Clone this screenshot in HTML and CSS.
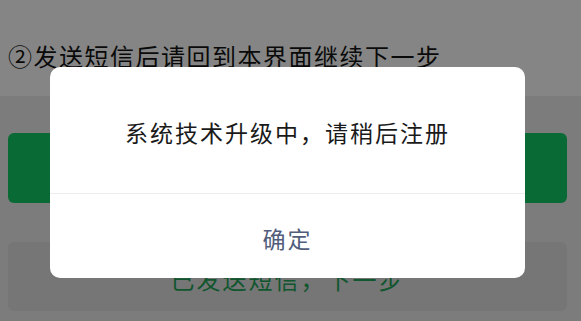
FILE: index.html
```html
<!DOCTYPE html>
<html lang="zh-CN">
<head>
<meta charset="utf-8">
<link rel="stylesheet" href="styles.css">
</head>
<body>
<div class="page">
  <div class="tip">
    <p class="tip-text">②发送短信后请回到本界面继续下一步</p>
  </div>
  <div class="actions">
    <div class="btn btn-primary"></div>
    <div class="btn btn-secondary">已发送短信，下一步</div>
  </div>
  <div class="mask"></div>
  <div class="dialog">
    <div class="dialog-body">系统技术升级中，请稍后注册</div>
    <div class="dialog-footer">确定</div>
  </div>
</div>
</body>
</html>
```
FILE: styles.css
```css
* { box-sizing: border-box; }
html, body {
  margin: 0;
  padding: 0;
  width: 581px;
  height: 321px;
  overflow: hidden;
  font-family: "Noto Sans CJK SC", "Noto Sans", sans-serif;
}
.page {
  position: relative;
  width: 581px;
  height: 321px;
  background: #ededed;
}
.tip {
  height: 96px;
  background: #ffffff;
  padding: 39px 14px 0 8px;
}
.tip-text {
  margin: 0;
  font-size: 24px;
  line-height: 34px;
  letter-spacing: 1.5px;
  color: #141414;
}
.actions {
  padding: 37px 14px 0 8px;
  display: flex;
  flex-direction: column;
  gap: 39px;
}
.btn {
  height: 70px;
  border-radius: 6px;
  display: flex;
  align-items: center;
  justify-content: center;
  font-size: 24px;
  letter-spacing: 2px;
}
.btn-primary {
  background: #15cc68;
}
.btn-secondary {
  height: 69px;
  background: #e2e2e2;
  color: #1fa558;
  padding-top: 4px;
}
.mask {
  position: absolute;
  inset: 0;
  background: rgba(0, 0, 0, 0.48);
}
.dialog {
  position: absolute;
  left: 50px;
  top: 67px;
  width: 475px;
  height: 211px;
  background: #ffffff;
  border-radius: 10px;
  display: flex;
  flex-direction: column;
}
.dialog-body {
  height: 127px;
  display: flex;
  align-items: center;
  justify-content: center;
  font-size: 23px;
  letter-spacing: 2px;
  color: #1a1a1a;
  border-bottom: 1px solid #ececec;
  padding-top: 4px;
}
.dialog-footer {
  flex: 1;
  display: flex;
  align-items: center;
  justify-content: center;
  font-size: 23px;
  letter-spacing: 2px;
  color: #515d7a;
  padding-top: 4px;
}
```
